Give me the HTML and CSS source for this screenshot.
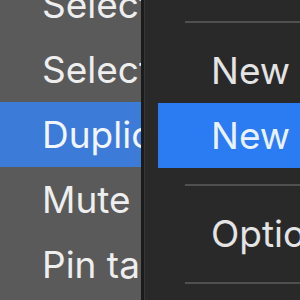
FILE: index.html
```html
<!DOCTYPE html>
<html>
<head>
<meta charset="utf-8">
<link rel="stylesheet" href="styles.css">
</head>
<body>
<div class="screen">
  <div class="menu menu-parent">
    <ul class="items parent-items">
      <li class="item">Select</li>
      <li class="item">Select</li>
      <li class="item item-parent-active">Duplicate</li>
      <li class="item">Mute</li>
      <li class="item">Pin tab</li>
    </ul>
  </div>
  <div class="edge"></div>
  <div class="menu menu-sub">
    <ul class="items sub-items">
      <li class="sep"><span class="sep-line"></span></li>
      <li class="item sub-item">New</li>
      <li class="item sub-item item-active">New</li>
      <li class="sep"><span class="sep-line"></span></li>
      <li class="item sub-item">Options</li>
      <li class="sep"><span class="sep-line"></span></li>
    </ul>
  </div>
</div>
</body>
</html>
```

FILE: styles.css
```css
html, body {
  margin: 0;
  padding: 0;
  width: 300px;
  height: 300px;
  overflow: hidden;
  background: #292929;
}

.screen {
  display: flex;
  width: 300px;
  height: 300px;
  font-family: Inter, "Liberation Sans", sans-serif;
  font-size: 37px;
}

.menu {
  overflow: hidden;
  height: 300px;
}

.menu-parent {
  width: 141px;
  flex: none;
  background: #5a5a5a;
}

.edge {
  width: 3px;
  flex: none;
  background: #1b1b1b;
  border-right: 1px solid #363636;
}

.menu-sub {
  flex: 1;
  background: #292929;
}

.items {
  list-style: none;
  margin: 0;
  padding: 0;
}

.parent-items {
  margin-top: -28px;
}

.item {
  height: 65px;
  display: flex;
  align-items: center;
  white-space: nowrap;
  padding-left: 42px;
  color: #eeeeee;
}

.item-parent-active {
  background: #3d7bd9;
  color: #f2f6ff;
}

.sub-items {
  padding-top: 5px;
}

.sub-item {
  margin-left: 13px;
  padding-left: 53px;
  color: #e4e4e4;
}

.item-active {
  background: #2b7cf3;
  color: #eaf2ff;
}

.sep {
  height: 33px;
  display: flex;
  align-items: center;
  padding-left: 40px;
}

.sep-line {
  display: block;
  flex: 1;
  height: 2px;
  background: #505050;
}
```
